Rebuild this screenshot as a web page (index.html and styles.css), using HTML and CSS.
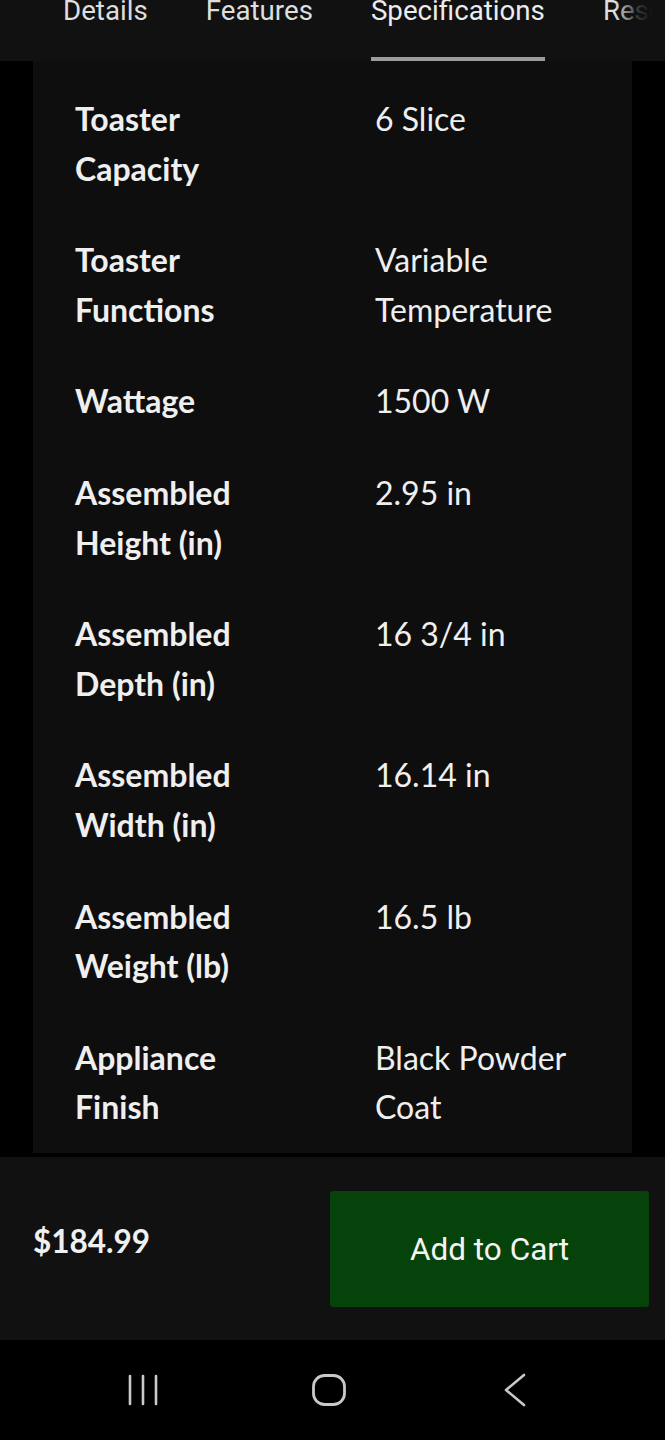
FILE: index.html
```html
<!DOCTYPE html>
<html lang="en">
<head>
<meta charset="utf-8">
<title>Specifications</title>
<link rel="stylesheet" href="styles.css">
</head>
<body>
<div class="screen">
  <nav class="tabs">
    <div class="tab"><span class="tab-label">Details</span></div>
    <div class="tab"><span class="tab-label">Features</span></div>
    <div class="tab active"><span class="tab-label">Specifications</span></div>
    <div class="tab"><span class="tab-label">Resources</span></div>
    <div class="tab-fade"></div>
  </nav>

  <main class="content">
    <section class="card">
      <div class="row"><div class="label">Toaster<br>Capacity</div><div class="value">6 Slice</div></div>
      <div class="row"><div class="label">Toaster<br>Functions</div><div class="value">Variable<br>Temperature</div></div>
      <div class="row"><div class="label">Wattage</div><div class="value">1500 W</div></div>
      <div class="row"><div class="label">Assembled<br>Height (in)</div><div class="value">2.95 in</div></div>
      <div class="row"><div class="label">Assembled<br>Depth (in)</div><div class="value">16 3/4 in</div></div>
      <div class="row"><div class="label">Assembled<br>Width (in)</div><div class="value">16.14 in</div></div>
      <div class="row"><div class="label">Assembled<br>Weight (lb)</div><div class="value">16.5 lb</div></div>
      <div class="row"><div class="label">Appliance<br>Finish</div><div class="value">Black Powder<br>Coat</div></div>
    </section>
  </main>

  <footer class="buybar">
    <div class="price">$184.99</div>
    <button class="cart-btn">Add to Cart</button>
  </footer>

  <div class="sysnav">
    <div class="nav-slot">
      <svg class="nav-icon" width="30" height="32" viewBox="0 0 30 32">
        <g stroke="#c9c9c9" stroke-width="2.6" stroke-linecap="round" fill="none">
          <line x1="2" y1="2" x2="2" y2="30"/>
          <line x1="15" y1="2" x2="15" y2="30"/>
          <line x1="28" y1="2" x2="28" y2="30"/>
        </g>
      </svg>
    </div>
    <div class="nav-slot">
      <svg class="nav-icon" width="34" height="32" viewBox="0 0 34 32">
        <rect x="1.5" y="1.5" width="31" height="29" rx="11" ry="11" stroke="#c9c9c9" stroke-width="2.8" fill="none"/>
      </svg>
    </div>
    <div class="nav-slot">
      <svg class="nav-icon" width="22" height="34" viewBox="0 0 22 34">
        <polyline points="20,2 2,17 20,32" stroke="#c9c9c9" stroke-width="2.6" stroke-linecap="round" stroke-linejoin="round" fill="none"/>
      </svg>
    </div>
  </div>
</div>
</body>
</html>
```

FILE: styles.css
```css
* { box-sizing: border-box; }

html, body {
  margin: 0;
  padding: 0;
  background: #000;
}

.screen {
  width: 665px;
  height: 1440px;
  display: flex;
  flex-direction: column;
  background: #000;
  overflow: hidden;
}

/* ---------- tabs ---------- */
.tabs {
  position: relative;
  height: 61px;
  flex: none;
  background: #111111;
  display: flex;
  gap: 58px;
  padding-left: 63px;
  overflow: hidden;
  font-family: Roboto, "Liberation Sans", sans-serif;
  font-size: 27.7px;
  color: #dedede;
  white-space: nowrap;
}

.tab {
  display: flex;
  flex-direction: column;
  justify-content: space-between;
  height: 61px;
}

.tab-label {
  display: block;
  line-height: 26px;
  margin-top: -2px;
}

.tab.active {
  color: #ececec;
}

.tab.active::after {
  content: "";
  display: block;
  height: 4px;
  background: #9b9b9b;
}

.tab-fade {
  position: absolute;
  top: 0;
  right: 0;
  width: 50px;
  height: 61px;
  background: linear-gradient(to right, rgba(17,17,17,0) 0%, rgba(17,17,17,0.8) 45%, #111111 75%);
}

/* ---------- content ---------- */
.content {
  flex: none;
  height: 1096px;
  padding: 0 33px;
}

.card {
  background: #0e0e0e;
  padding: 12px 42px 0;
  font-family: Lato, "Open Sans", sans-serif;
  font-size: 32px;
  line-height: 49.6px;
  color: #efefef;
}

.row {
  display: grid;
  grid-template-columns: 300px 1fr;
  padding: 21px 0 21px;
}

.label {
  font-weight: 700;
}

.value {
  font-weight: 400;
}

/* ---------- buy bar ---------- */
.buybar {
  flex: none;
  height: 183px;
  background: #111111;
  display: flex;
  align-items: center;
  justify-content: space-between;
  padding: 0 16px 0 33px;
}

.price {
  font-family: Lato, "Open Sans", sans-serif;
  font-weight: 700;
  font-size: 31.5px;
  color: #f0f0f0;
  margin-top: -16px;
}

.cart-btn {
  width: 319px;
  height: 116px;
  margin-top: 1px;
  border: none;
  border-radius: 3px;
  background: #06430a;
  color: #f4f4f4;
  font-family: Roboto, "Liberation Sans", sans-serif;
  font-size: 31.5px;
  padding: 0;
}

/* ---------- system nav ---------- */
.sysnav {
  flex: none;
  height: 100px;
  background: #000;
  display: flex;
  align-items: center;
  padding-left: 50px;
}

.nav-slot {
  width: 186px;
  display: flex;
  justify-content: center;
  align-items: center;
}

.nav-icon {
  display: block;
}
```
